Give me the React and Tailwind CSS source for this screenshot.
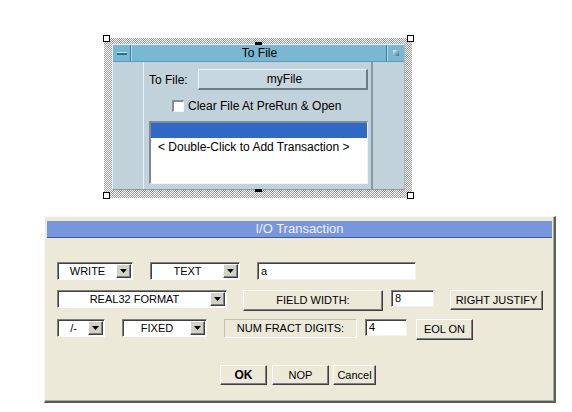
import React from 'react';

const hatch =
  'bg-[image:repeating-conic-gradient(#9a9a9a_0%_25%,#ffffff_0%_50%)] bg-[length:2px_2px]';

function Handle({ className }) {
  return <div className={'absolute w-[7px] h-[7px] bg-white border border-black ' + className} />;
}

function Arrow() {
  return (
    <div className="w-[15px] h-[14px] bg-[#d4d0c8] border-t border-l border-t-white border-l-white border-b border-r border-b-[#404040] border-r-[#404040] shadow-[inset_-1px_-1px_0_#808080] flex items-center justify-center">
      <svg width="7" height="4" viewBox="0 0 7 4">
        <path d="M0 0h7L3.5 4z" fill="#000" />
      </svg>
    </div>
  );
}

function Dropdown({ label, w }) {
  return (
    <div
      className={
        'h-[18px] flex items-center bg-white border-t border-l border-t-[#808080] border-l-[#808080] border-b border-r border-b-white border-r-white shadow-[inset_1px_1px_0_#404040] pl-[1px] pr-[1px] ' +
        w
      }
    >
      <div className="flex-1 text-center leading-none pt-[1px]">{label}</div>
      <Arrow />
    </div>
  );
}

function Input({ value, w, h }) {
  return (
    <div
      className={
        'bg-white border-t border-l border-t-[#808080] border-l-[#808080] border-b border-r border-b-[#f4f2ea] border-r-[#f4f2ea] shadow-[inset_1px_1px_0_#404040] pl-[3px] flex items-center leading-none ' +
        w +
        ' ' +
        h
      }
    >
      {value}
    </div>
  );
}

function Button({ children, w, h, bold }) {
  return (
    <div
      className={
        'flex items-center justify-center leading-none bg-[#ece9d8] border-t border-l border-t-white border-l-white border-b border-r border-b-[#404040] border-r-[#404040] shadow-[inset_-1px_-1px_0_#808080] ' +
        w +
        ' ' +
        h +
        (bold ? ' font-bold text-[12px]' : '')
      }
    >
      {children}
    </div>
  );
}

export default function App() {
  return (
    <div className="w-[572px] h-[412px] bg-white overflow-hidden font-['Liberation_Sans',Arial,sans-serif] text-black">
      {/* selected object */}
      <div className="pt-[38px] pl-[104px]">
        <div className={'relative w-[308px] h-[160px] pt-[6px] pl-[8px] ' + hatch}>
          <Handle className="-left-[1px] -top-[3px]" />
          <Handle className="left-[303px] -top-[3px]" />
          <Handle className="-left-[1px] top-[154px]" />
          <Handle className="left-[303px] top-[154px]" />
          <div className="absolute left-[151px] top-[4px] w-[7px] h-[3px] bg-black" />
          <div className="absolute left-[151px] top-[151px] w-[7px] h-[3px] bg-black" />

          <div className="w-[293px] h-[146px] flex flex-col bg-[#c2d2da] border border-[#e4eef2] border-b-[#8a98a0] border-r-[#a8b8c0]">
            <div className="h-[17px] flex bg-[#78b8d2] border-b border-[#5f9ab4]">
              <div className="w-[18px] flex items-center justify-center border-r border-[#3f7c98] shadow-[1px_0_0_#a8dcee]">
                <div className="w-[10px] h-[3px] bg-[#2c6e8e] border-t border-[#b8e4f2]" />
              </div>
              <div className="flex-1 text-center text-[12px] leading-[17px] pl-[2px]">To File</div>
              <div className="w-[18px] flex items-center justify-center border-l border-[#3f7c98] shadow-[inset_1px_0_0_#a8dcee]">
                <div className="w-[6px] h-[6px] bg-[linear-gradient(135deg,#e8f8fc,#2e6e90)]" />
              </div>
            </div>
            <div className="flex-1 flex">
              <div className="w-[30px]" />
              <div className="w-[230px] flex flex-col border-l border-[#e8f2f6] border-r-2 border-r-[#8a9aa4] text-[12px]">
                <div className="flex items-center pt-[7px] pl-[5px]">
                  <div className="w-[49px] pt-[1px]">To File:</div>
                  <div className="w-[170px] h-[21px] flex items-center justify-center bg-[#c6d6de] border-t border-l border-t-[#eef6f8] border-l-[#eef6f8] border-b-2 border-r-2 border-b-[#6c7c84] border-r-[#6c7c84] pl-[4px]">
                    myFile
                  </div>
                </div>
                <div className="flex items-center pt-[10px] pl-[28px]">
                  <div className="w-[12px] h-[12px] bg-white border-t-2 border-l-2 border-t-[#8090a0] border-l-[#8090a0] border-b border-r border-b-[#eef6f8] border-r-[#eef6f8]" />
                  <div className="pl-[4px] leading-[12px]">Clear File At PreRun &amp; Open</div>
                </div>
                <div className="mt-[9px] ml-[5px] w-[219px] h-[63px] bg-white border-t-2 border-l-2 border-t-[#808a94] border-l-[#808a94] border-b border-r border-b-[#eef6f8] border-r-[#eef6f8] flex flex-col">
                  <div className="h-[15px] bg-[#3068c8]" />
                  <div className="pl-[7px] pt-[2px] leading-[14px]">&lt; Double-Click to Add Transaction &gt;</div>
                </div>
              </div>
              <div className="flex-1" />
            </div>
          </div>
        </div>
      </div>

      {/* I/O Transaction dialog */}
      <div className="ml-[44px] mt-[18px] w-[512px] h-[187px] bg-[#ece9d8] border-t border-l border-t-[#f8f8f4] border-l-[#f8f8f4] border-b-2 border-r-2 border-b-[#5c5c58] border-r-[#5c5c58] shadow-[inset_-1px_-1px_0_#aca899] text-[11px] flex flex-col">
        <div className="mt-[4px] mx-[2px] h-[17px] bg-[#7896dc] border-b border-[#3a5aa8] text-[#eef2fc] text-[13px] text-center leading-[16px]">
          I/O Transaction
        </div>
        <div className="pl-[12px] pt-[24px] flex flex-col">
          <div className="flex items-start">
            <Dropdown label="WRITE" w="w-[76px]" />
            <div className="w-[17px]" />
            <Dropdown label="TEXT" w="w-[90px]" />
            <div className="w-[17px]" />
            <Input value="a" w="w-[159px]" h="h-[18px]" />
          </div>
          <div className="flex items-start mt-[10px]">
            <Dropdown label="REAL32 FORMAT" w="w-[170px]" />
            <div className="w-[16px]" />
            <Button w="w-[140px]" h="h-[21px]">FIELD WIDTH:</Button>
            <div className="w-[8px]" />
            <Input value="8" w="w-[43px]" h="h-[17px]" />
            <div className="w-[16px]" />
            <Button w="w-[93px]" h="h-[20px]">RIGHT JUSTIFY</Button>
          </div>
          <div className="flex items-start mt-[8px]">
            <Dropdown label="/-" w="w-[48px]" />
            <div className="w-[17px]" />
            <Dropdown label="FIXED" w="w-[85px]" />
            <div className="w-[17px]" />
            <div className="w-[133px] h-[19px] flex items-center justify-center leading-none border border-t-[#c4c0b0] border-l-[#c4c0b0] border-b-white border-r-white">
              NUM FRACT DIGITS:
            </div>
            <div className="w-[8px]" />
            <Input value="4" w="w-[42px]" h="h-[17px]" />
            <div className="w-[9px]" />
            <Button w="w-[57px]" h="h-[21px]">EOL ON</Button>
          </div>
          <div className="flex items-start mt-[25px] pl-[163px]">
            <Button w="w-[47px]" h="h-[20px]" bold>OK</Button>
            <div className="w-[5px]" />
            <Button w="w-[57px]" h="h-[20px]">NOP</Button>
            <div className="w-[4px]" />
            <Button w="w-[43px]" h="h-[20px]">Cancel</Button>
          </div>
        </div>
      </div>
    </div>
  );
}
